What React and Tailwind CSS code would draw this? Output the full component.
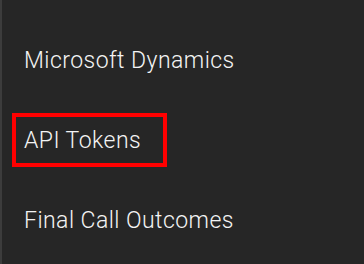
export default function App() {
  const items = [
    { label: "Microsoft Dynamics", active: false },
    { label: "API Tokens", active: true },
    { label: "Final Call Outcomes", active: false },
  ];
  return (
    <div
      className="w-[364px] h-[264px] bg-[#262626] border-l-2 border-[#3c3c3c] overflow-hidden pt-5"
      style={{ fontFamily: "Roboto, 'Liberation Sans', sans-serif" }}
    >
      {items.map((it) => (
        <div key={it.label} className="h-[80px] flex items-center pl-[10px]">
          <span
            className={
              "border-4 pl-2 pr-[22px] pt-[11px] pb-[9px] text-[23px] leading-[26px] font-light text-[#f4f4f4] tracking-[0.45px] " +
              (it.active ? "border-[#ff0000]" : "border-transparent")
            }
          >
            {it.label}
          </span>
        </div>
      ))}
    </div>
  );
}
